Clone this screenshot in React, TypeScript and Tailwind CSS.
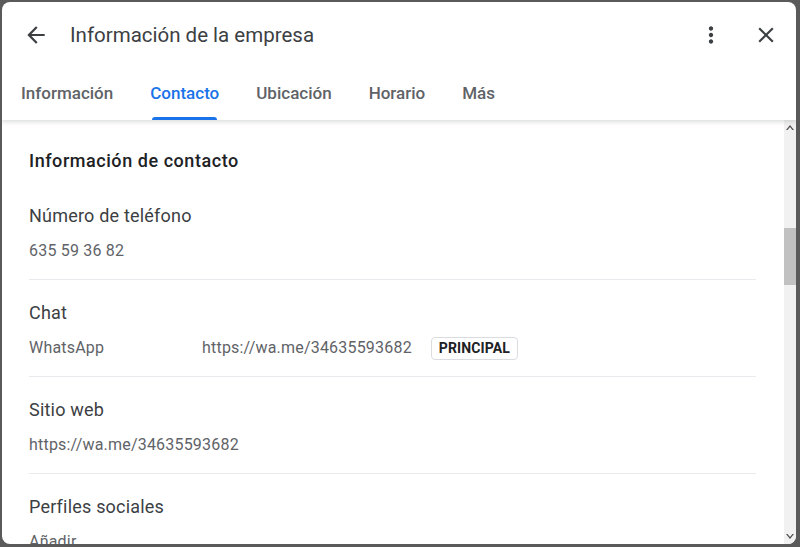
import React from "react";

const tabs = ["Información", "Contacto", "Ubicación", "Horario", "Más"];

function Icon({ d, className }: { d: string; className?: string }) {
  return (
    <svg viewBox="0 0 24 24" className={className} fill="currentColor">
      <path d={d} />
    </svg>
  );
}

function Section({ label, children, last }: { label: string; children: React.ReactNode; last?: boolean }) {
  return (
    <div className={`pt-[21px] pb-[18px] ${last ? "" : "border-b border-[#e8eaed]"}`}>
      <div className="text-[18px] leading-6 tracking-[0.2px] text-[#3c4043]">{label}</div>
      <div className="mt-[13px] h-5 text-[16px] leading-5 tracking-[0.2px] text-[#5f6368]">{children}</div>
    </div>
  );
}

export default function App() {
  return (
    <div className="w-[800px] h-[547px] bg-[#5a5a5a] pt-[2px] pl-[2px] pr-[4px] pb-[3px] font-['Roboto',sans-serif]">
      <div className="h-full bg-white rounded-[8px] overflow-hidden flex flex-col">
        <header className="relative z-10 shadow-[0_2px_4px_rgba(60,64,67,0.18)]">
          <div className="h-[66px] flex items-center pl-[21px] pr-[17px]">
            <Icon d="M20 11H7.83l5.59-5.59L12 4l-8 8 8 8 1.41-1.41L7.83 13H20v-2z" className="w-[26px] h-[26px] text-[#3c4043]" />
            <h1 className="ml-[21px] text-[20.5px] text-[#3c4043] flex-1">Información de la empresa</h1>
            <Icon d="M12 8c1.1 0 2-.9 2-2s-.9-2-2-2-2 .9-2 2 .9 2 2 2zm0 2c-1.1 0-2 .9-2 2s.9 2 2 2 2-.9 2-2-.9-2-2-2zm0 6c-1.1 0-2 .9-2 2s.9 2 2 2 2-.9 2-2-.9-2-2-2z" className="w-[26px] h-[26px] text-[#3c4043]" />
            <Icon d="M19 6.41L17.59 5 12 10.59 6.41 5 5 6.41 10.59 12 5 17.59 6.41 19 12 13.41 17.59 19 19 17.59 13.41 12z" className="ml-[29px] w-[26px] h-[26px] text-[#3c4043]" />
          </div>
          <nav className="h-[52px] flex pl-[0.5px]">
            {tabs.map((t) => {
              const active = t === "Contacto";
              return (
                <div key={t} className="px-[18.5px] flex items-center">
                  <span className={`relative h-full flex items-center text-[17px] font-medium ${active ? "text-[#1a73e8]" : "text-[#5f6368]"}`}>
                    {t}
                    {active && <span className="absolute left-[2px] right-[2px] bottom-0 h-[3px] rounded-t-[3px] bg-[#1a73e8]" />}
                  </span>
                </div>
              );
            })}
          </nav>
        </header>
        <div className="flex-1 flex min-h-0">
          <main className="flex-1 overflow-hidden pl-[27px] pr-[28px] pt-[29px]">
            <h2 className="text-[18px] leading-6 tracking-[0.55px] font-medium text-[#202124] mb-[10px]">Información de contacto</h2>
            <Section label="Número de teléfono">635 59 36 82</Section>
            <Section label="Chat">
              <div className="h-5 flex items-center">
                <span className="w-[173px] shrink-0">WhatsApp</span>
                <span>https://wa.me/34635593682</span>
                <span className="ml-[19px] h-[23px] px-[7px] flex items-center rounded-[4px] border border-[#dadce0] text-[14px] font-bold tracking-[0.1px] text-[#202124]">PRINCIPAL</span>
              </div>
            </Section>
            <Section label="Sitio web">https://wa.me/34635593682</Section>
            <Section label="Perfiles sociales" last>Añadir</Section>
          </main>
          <div className="w-[12px] bg-[#f1f1f1] flex flex-col items-center">
            <svg viewBox="0 0 10 6" className="w-[8px] h-[5px] mt-[5px] text-[#505050]" fill="currentColor"><path d="M0 6 5 0l5 6H8L5 2.4 2 6z" /></svg>
            <div className="mt-[98px] w-full h-[57px] bg-[#c1c1c1]" />
            <div className="flex-1" />
            <svg viewBox="0 0 10 6" className="w-[8px] h-[5px] mb-[5px] text-[#505050]" fill="currentColor"><path d="M0 0 5 6l5-6H8L5 3.6 2 0z" /></svg>
          </div>
        </div>
      </div>
    </div>
  );
}
